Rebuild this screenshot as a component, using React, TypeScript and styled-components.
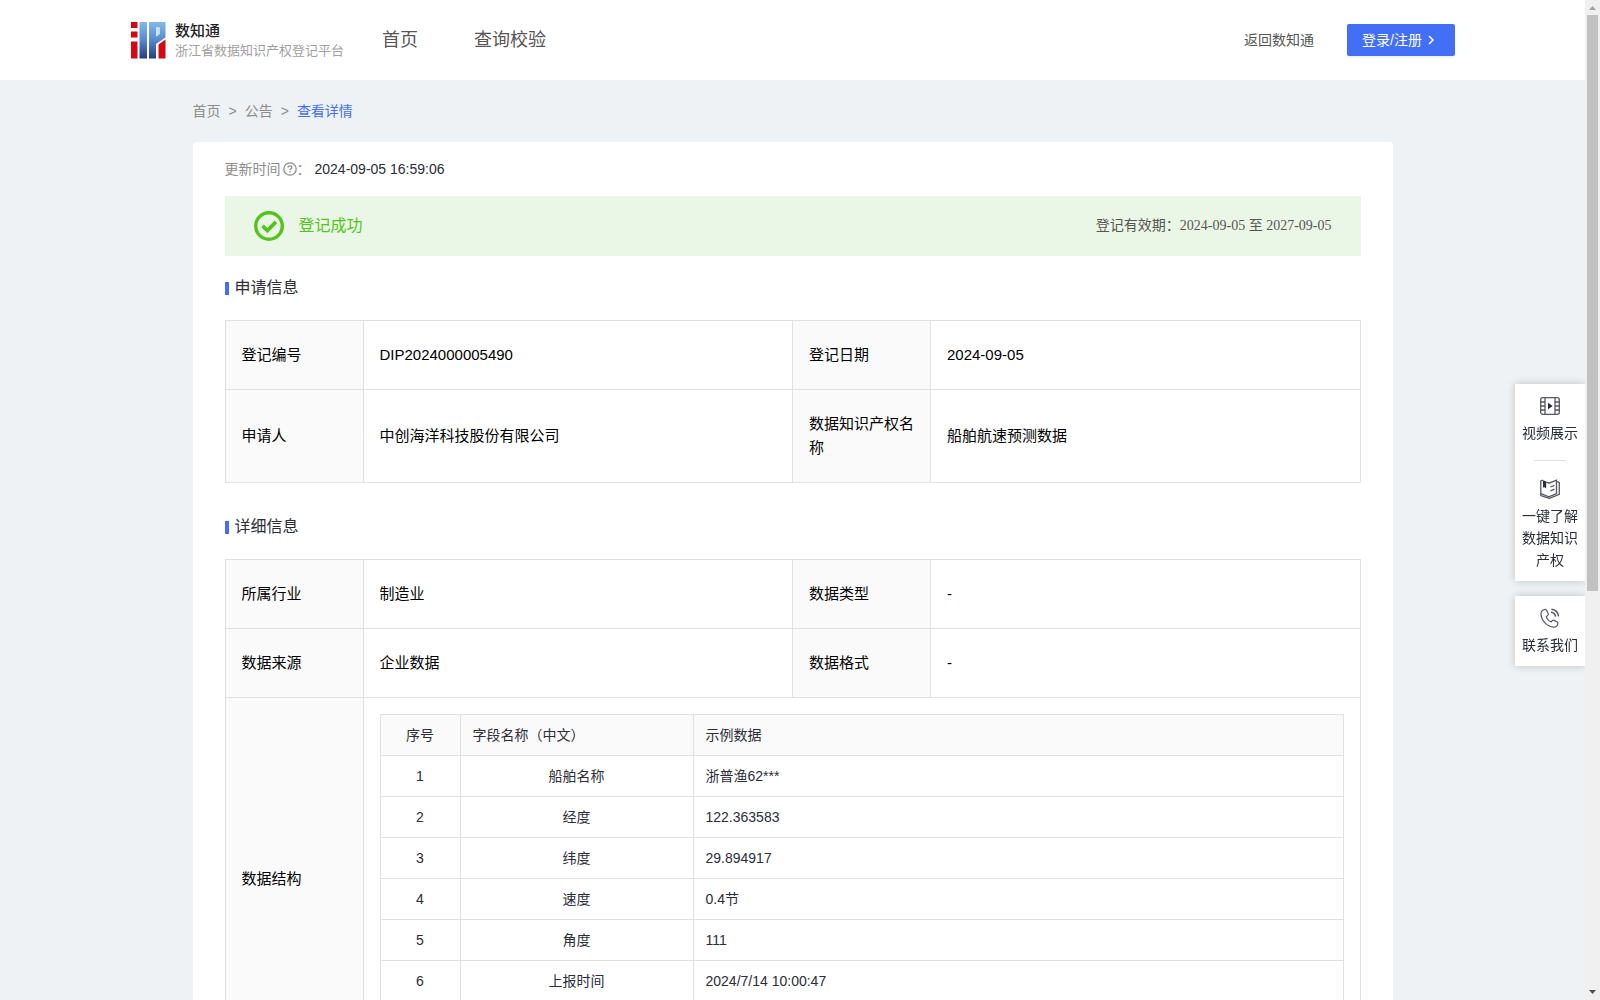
import React from "react";
import styled, { createGlobalStyle } from "styled-components";

const color = {
  page: "#eef2f5",
  primary: "#436ff6",
  text: "#2b2d38",
  nav: "#555555",
  muted: "#8c8c8c",
  line: "#e1e1e1",
  head: "#fafafa",
  success: "#52c41a",
};

const GlobalStyle = createGlobalStyle`
  * { box-sizing: border-box; }
  html { scrollbar-width: none; }
  body {
    margin: 0;
    background: ${color.page};
    color: ${color.text};
    font-family: "Liberation Sans", "Noto Sans CJK SC", sans-serif;
    font-size: 14px;
    line-height: 22px;
  }
  a { color: inherit; text-decoration: none; }
`;

const Page = styled.div`
  min-height: 100vh;
  padding-right: 15px;
  padding-bottom: 32px;
`;

const Header = styled.header`
  display: flex;
  align-items: center;
  height: 80px;
  padding: 0 130px 0 131px;
  background: #fff;
`;

const Brand = styled.a`
  display: flex;
  align-items: center;
  gap: 9px;
`;

const BrandText = styled.span`
  display: flex;
  flex-direction: column;
  padding-top: 2px;
`;

const BrandName = styled.span`
  color: #222;
  font-size: 15px;
  font-weight: 500;
  line-height: 20px;
`;

const BrandSub = styled.span`
  color: #a0a0a0;
  font-size: 13px;
  line-height: 20px;
`;

const Nav = styled.nav`
  display: flex;
  flex: 1;
  gap: 56px;
  margin-left: 38px;
  color: ${color.nav};
  font-size: 18px;
`;

const BackLink = styled.a`
  margin-right: 33px;
  color: ${color.nav};
`;

const LoginButton = styled.button`
  display: flex;
  align-items: center;
  gap: 4px;
  width: 108px;
  height: 32px;
  padding: 0 15px;
  border: 0;
  border-radius: 2px;
  background: ${color.primary};
  box-shadow: 0 2px 2px rgba(0, 0, 0, 0.05);
  color: #fff;
  font: inherit;
  white-space: nowrap;
`;

const Container = styled.div`
  max-width: 1200px;
  margin: 0 auto;
`;

const Breadcrumb = styled.nav`
  display: flex;
  align-items: center;
  gap: 8px;
  height: 62px;
  color: ${color.muted};
`;

const Current = styled.a`
  color: ${color.primary};
`;

const Card = styled.main`
  padding: 0 32px 32px;
  border-radius: 4px;
  background: #fff;
`;

const UpdateRow = styled.div`
  display: flex;
  align-items: center;
  height: 54px;
  color: ${color.muted};
`;

const HelpIcon = styled.svg`
  margin-left: 2px;
`;

const UpdateTime = styled.time`
  margin-left: 4px;
  color: ${color.text};
`;

const Banner = styled.section`
  display: flex;
  align-items: center;
  justify-content: space-between;
  height: 60px;
  padding: 0 29px;
  background: #ebf7e6;
`;

const Status = styled.strong`
  display: flex;
  align-items: center;
  gap: 15px;
  color: ${color.success};
  font-size: 16px;
  font-weight: 400;
`;

const Validity = styled.span`
  color: ${color.nav};
  font-family: "Liberation Serif", "Noto Sans CJK SC", serif;
`;

const SectionTitle = styled.h2<{ $spaced?: boolean }>`
  display: flex;
  align-items: center;
  gap: 6px;
  height: 64px;
  margin: ${(p) => (p.$spaced ? "12px" : "0")} 0 0;
  font-size: 16px;
  font-weight: 400;

  &::before {
    content: "";
    width: 4px;
    height: 13px;
    background: ${color.primary};
  }
`;

const InfoTable = styled.table`
  width: 100%;
  border-collapse: collapse;
  table-layout: fixed;
  color: #000;
  font-size: 15px;
  line-height: 24px;
`;

const LabelCol = styled.col`
  width: 138px;
`;

const cell = `
  border: 1px solid ${color.line};
  text-align: left;
  font-weight: 400;
`;

const Label = styled.th`
  ${cell}
  padding: 22px 16px;
  background: ${color.head};
`;

const Value = styled.td`
  ${cell}
  padding: 22px 16px;
`;

const NestedCell = styled.td`
  ${cell}
  padding: 16px;
`;

const FieldTable = styled.table`
  width: 100%;
  border-collapse: collapse;
  table-layout: fixed;
  color: ${color.text};
  font-size: 14px;
  line-height: 22px;
`;

const FieldCol = styled.col<{ $width: number }>`
  width: ${(p) => p.$width}px;
`;

const FieldHead = styled.th<{ $center?: boolean }>`
  height: 41px;
  padding: 0 12px;
  border: 1px solid ${color.line};
  background: ${color.head};
  font-weight: 400;
  text-align: ${(p) => (p.$center ? "center" : "left")};
`;

const FieldCell = styled.td<{ $center?: boolean }>`
  height: 41px;
  padding: 0 12px;
  border: 1px solid ${color.line};
  text-align: ${(p) => (p.$center ? "center" : "left")};
`;

const SideBar = styled.aside`
  position: fixed;
  top: 384px;
  right: 15px;
  display: flex;
  flex-direction: column;
  gap: 15px;
  width: 70px;
`;

const SidePanel = styled.div`
  display: flex;
  flex-direction: column;
  align-items: center;
  padding: 12px 6px 10px;
  background: #fff;
  box-shadow: 0 0 8px rgba(0, 0, 0, 0.2);
`;

const SideLink = styled.a`
  display: flex;
  flex-direction: column;
  align-items: center;
  gap: 6px;
  text-align: center;
`;

const SideDivider = styled.hr`
  width: 32px;
  height: 1px;
  margin: 16px 0 18px;
  border: 0;
  background: ${color.line};
`;

const ScrollTrack = styled.div`
  position: fixed;
  top: 0;
  right: 0;
  bottom: 0;
  display: flex;
  flex-direction: column;
  width: 15px;
  padding: 0 2px;
  background: #f0f0f0;
`;

const ScrollThumb = styled.div`
  flex: 0 0 auto;
  height: 57.6%;
  background: #c1c1c1;
`;

const ScrollSpace = styled.div`
  flex: 1;
`;

const ScrollArrow = styled.svg`
  flex: none;
  width: 11px;
  height: 15px;
`;

const Logo = () => (
  <svg width="35" height="37" viewBox="0 0 35 37" aria-hidden="true">
    <defs>
      <linearGradient id="logoBlue" gradientUnits="userSpaceOnUse" x1="0" y1="0" x2="0" y2="37">
        <stop offset="0" stopColor="#83b9ea" />
        <stop offset="0.45" stopColor="#5a8ed0" />
        <stop offset="1" stopColor="#253a84" />
      </linearGradient>
    </defs>
    <path d="M0 0h6.500v6H0zM0 9.500h6.500v6H0zM0 19.500h6.500V36.500H0z" fill="#d40912" />
    <path d="M8.500 0h7.500v36.500H8.500z" fill="url(#logoBlue)" />
    <path
      d="M18 0h16.500v15.500L25 22v14.500h-7zM25 5.500v9l3.500-2.500v-6.500z"
      fill="url(#logoBlue)"
      fillRule="evenodd"
    />
    <path d="M25 5.500v9l3.500-2.500v-6.500z" fill="#cfe2f5" />
    <path d="M27.500 22.500l7-5v19h-7z" fill="#d40912" />
  </svg>
);

const SuccessIcon = () => (
  <svg width="30" height="30" viewBox="0 0 30 30" fill="none" stroke={color.success} aria-hidden="true">
    <circle cx="15" cy="15" r="13.300" strokeWidth="3.400" />
    <path d="M8.500 14.800l4.900 4.700 8.500-8.700" strokeWidth="3.800" />
  </svg>
);

const VideoIcon = () => (
  <svg width="20" height="20" viewBox="0 0 20 20" fill="none" stroke="#55575f" strokeWidth="1.300" aria-hidden="true">
    <rect x="0.700" y="1.700" width="18.600" height="16.600" rx="2" />
    <path d="M5 1.700v16.600M15 1.700v16.600M0.700 6H5M0.700 10H5M0.700 14H5M15 6h4.300M15 10h4.300M15 14h4.300" />
    <path d="M8 6.800l4.700 3.200L8 13.200z" fill="#2b2d38" stroke="none" />
  </svg>
);

const BookIcon = () => (
  <svg width="20" height="20" viewBox="0 0 20 20" fill="none" stroke="#55575f" strokeWidth="1.300" aria-hidden="true">
    <path d="M3 1.200L.8 2v12.500l8 3.300 7.700-3.300V1.200L9 4.200 6.200 3" />
    <path d="M.8 14.500v2l8.500 2.900 10-4V3.500l-2.800-.8" />
    <path d="M10.500 8l4-1.700M10.500 11.800l4-1.700" />
    <path d="M3 1.200l3.200 1.400v7L4.600 8.200 3 8.500z" fill="#2b2d38" stroke="none" />
  </svg>
);

const PhoneIcon = () => (
  <svg width="20" height="20" viewBox="0 0 20 20" fill="none" stroke="#55575f" strokeWidth="1.200" aria-hidden="true">
    <path d="M4.500 1.500C2 2.200.8 4 1 6.500c.4 6 6 12 12.500 12.600 2 .1 3.800-1.300 4.300-3.300.2-.8-.1-1.300-.7-1.700l-2.800-1.700c-.8-.4-1.400-.3-2 .3l-1 1.200c-2.400-.8-4.300-2.900-5-5.300l1.500-1.200c.6-.5.7-1.100.4-1.800L6.500 2.200c-.4-.7-1-1-2-.7z" />
    <path d="M11 4.300c2.500.2 4.300 1.900 4.600 4.400M11.400 1.300c4 .4 6.700 3 7.200 7" strokeWidth="1.500" />
  </svg>
);

const fields = [
  ["船舶名称", "浙普渔62***"],
  ["经度", "122.363583"],
  ["纬度", "29.894917"],
  ["速度", "0.4节"],
  ["角度", "111"],
  ["上报时间", "2024/7/14 10:00:47"],
  ["-", "-"],
];

type Pair = [string, string];

const InfoRow = ({ items }: { items: Pair[] }) => (
  <tr>
    {items.map(([label, value]) => (
      <React.Fragment key={label}>
        <Label scope="row">{label}</Label>
        <Value>{value}</Value>
      </React.Fragment>
    ))}
  </tr>
);

const InfoCols = () => (
  <colgroup>
    <LabelCol />
    <col />
    <LabelCol />
    <col />
  </colgroup>
);

const App = () => (
  <>
    <GlobalStyle />
    <Page lang="zh-CN">
      <Header>
        <Brand href="#">
          <Logo />
          <BrandText>
            <BrandName>数知通</BrandName>
            <BrandSub>浙江省数据知识产权登记平台</BrandSub>
          </BrandText>
        </Brand>
        <Nav>
          <a href="#">首页</a>
          <a href="#">查询校验</a>
        </Nav>
        <BackLink href="#">返回数知通</BackLink>
        <LoginButton type="button">
          登录/注册
          <svg width="10" height="10" viewBox="0 0 10 10" fill="none" stroke="#fff" strokeWidth="1.500" aria-hidden="true">
            <path d="M3 1l4 4-4 4" />
          </svg>
        </LoginButton>
      </Header>

      <Container>
        <Breadcrumb aria-label="面包屑">
          <a href="#">首页</a>
          <span>&gt;</span>
          <a href="#">公告</a>
          <span>&gt;</span>
          <Current href="#" aria-current="page">查看详情</Current>
        </Breadcrumb>

        <Card>
          <UpdateRow>
            <span>更新时间</span>
            <HelpIcon width="14" height="14" viewBox="0 0 14 14" fill="none" stroke={color.muted} strokeWidth="1.300" aria-hidden="true">
              <circle cx="7" cy="7" r="6.200" />
              <path d="M5.100 5.600c0-1.100.8-1.800 1.900-1.800s1.900.7 1.900 1.700c0 1.300-1.900 1.400-1.900 2.800M7 9.300v1.200" />
            </HelpIcon>
            <span>：</span>
            <UpdateTime>2024-09-05 16:59:06</UpdateTime>
          </UpdateRow>

          <Banner>
            <Status>
              <SuccessIcon />
              登记成功
            </Status>
            <Validity>登记有效期：2024-09-05 至 2027-09-05</Validity>
          </Banner>

          <SectionTitle>申请信息</SectionTitle>
          <InfoTable>
            <InfoCols />
            <tbody>
              <InfoRow items={[["登记编号", "DIP2024000005490"], ["登记日期", "2024-09-05"]]} />
              <InfoRow items={[["申请人", "中创海洋科技股份有限公司"], ["数据知识产权名称", "船舶航速预测数据"]]} />
            </tbody>
          </InfoTable>

          <SectionTitle $spaced>详细信息</SectionTitle>
          <InfoTable>
            <InfoCols />
            <tbody>
              <InfoRow items={[["所属行业", "制造业"], ["数据类型", "-"]]} />
              <InfoRow items={[["数据来源", "企业数据"], ["数据格式", "-"]]} />
              <tr>
                <Label scope="row">数据结构</Label>
                <NestedCell colSpan={3}>
                  <FieldTable>
                    <colgroup>
                      <FieldCol $width={80} />
                      <FieldCol $width={233} />
                      <col />
                    </colgroup>
                    <thead>
                      <tr>
                        <FieldHead $center>序号</FieldHead>
                        <FieldHead>字段名称（中文）</FieldHead>
                        <FieldHead>示例数据</FieldHead>
                      </tr>
                    </thead>
                    <tbody>
                      {fields.map(([name, sample], i) => (
                        <tr key={name}>
                          <FieldCell $center>{i + 1}</FieldCell>
                          <FieldCell $center>{name}</FieldCell>
                          <FieldCell>{sample}</FieldCell>
                        </tr>
                      ))}
                    </tbody>
                  </FieldTable>
                </NestedCell>
              </tr>
            </tbody>
          </InfoTable>
        </Card>
      </Container>

      <SideBar>
        <SidePanel>
          <SideLink href="#">
            <VideoIcon />
            视频展示
          </SideLink>
          <SideDivider />
          <SideLink href="#">
            <BookIcon />
            一键了解数据知识产权
          </SideLink>
        </SidePanel>
        <SidePanel>
          <SideLink href="#">
            <PhoneIcon />
            联系我们
          </SideLink>
        </SidePanel>
      </SideBar>

      <ScrollTrack aria-hidden="true">
        <ScrollArrow viewBox="0 0 11 15">
          <path d="M2 10l3.500-4L9 10z" fill="#a3a3a3" />
        </ScrollArrow>
        <ScrollThumb />
        <ScrollSpace />
        <ScrollArrow viewBox="0 0 11 15">
          <path d="M2 5l3.500 4L9 5z" fill="#505050" />
        </ScrollArrow>
      </ScrollTrack>
    </Page>
  </>
);

export default App;
